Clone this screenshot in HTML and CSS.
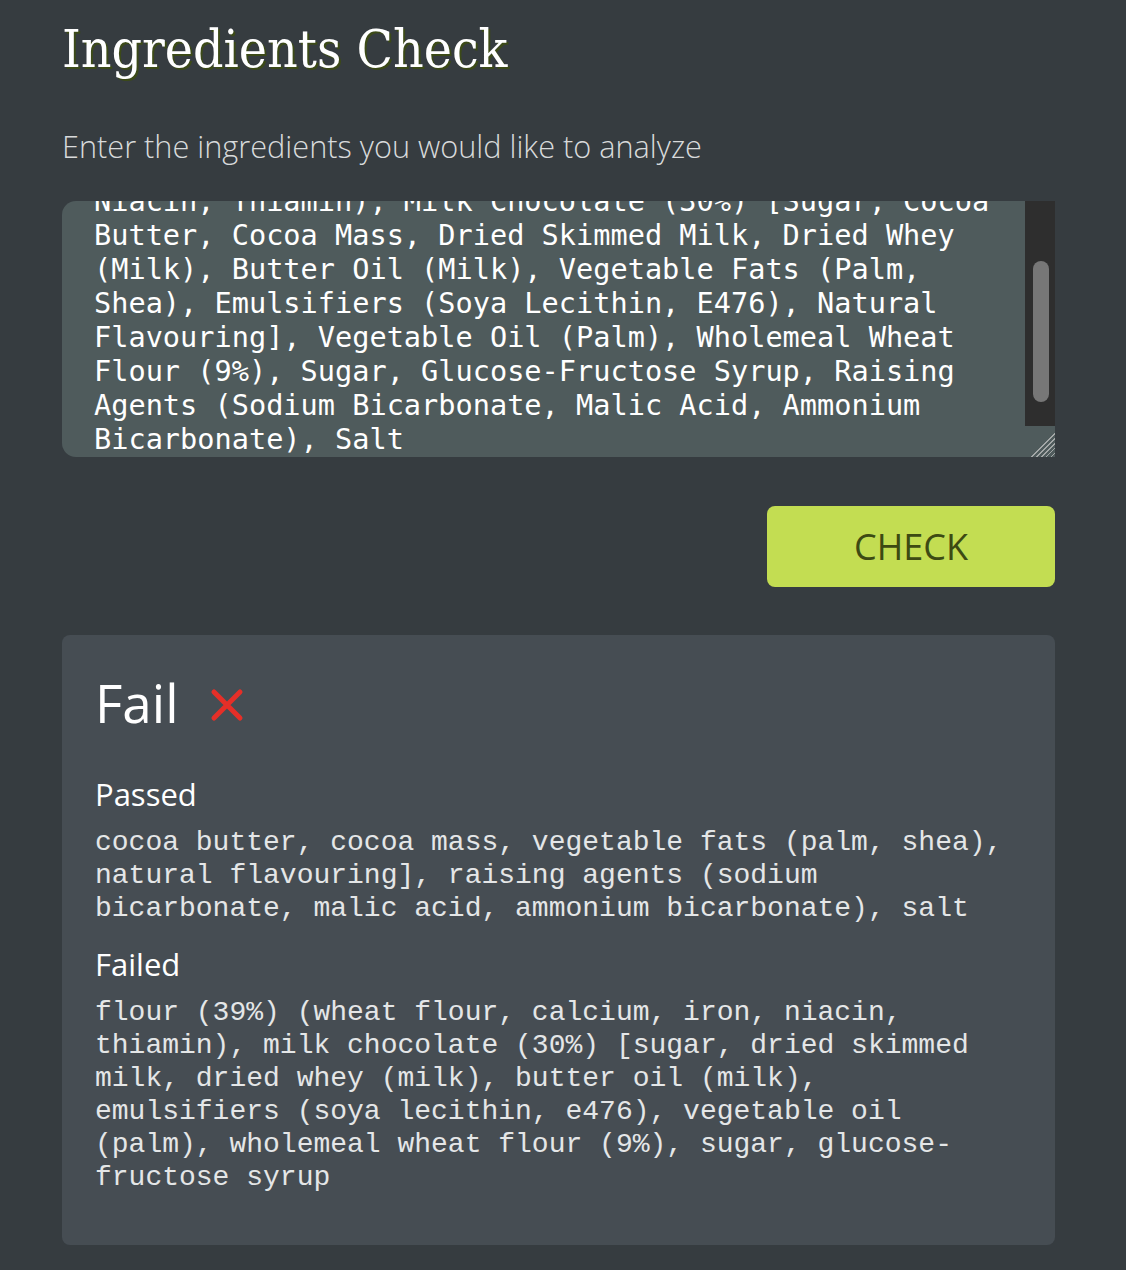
FILE: index.html
```html
<!DOCTYPE html>
<html lang="en">
<head>
<meta charset="utf-8">
<title>Ingredients Check</title>
<link rel="stylesheet" href="styles.css">
</head>
<body>
<main class="page">
  <h1 class="title">Ingredients Check</h1>
  <p class="lead">Enter the ingredients you would like to analyze</p>
  <div class="editor">
    <textarea class="input" spellcheck="false">Flour (39%) (Wheat Flour, Calcium, Iron,
Niacin, Thiamin), Milk Chocolate (30%) [Sugar, Cocoa Butter, Cocoa Mass, Dried Skimmed Milk, Dried Whey (Milk), Butter Oil (Milk), Vegetable Fats (Palm, Shea), Emulsifiers (Soya Lecithin, E476), Natural Flavouring], Vegetable Oil (Palm), Wholemeal Wheat Flour (9%), Sugar, Glucose-Fructose Syrup, Raising Agents (Sodium Bicarbonate, Malic Acid, Ammonium Bicarbonate), Salt</textarea>
    <div class="scrollbar" aria-hidden="true">
      <div class="scroll-track"><div class="scroll-thumb"></div></div>
      <div class="resizer"></div>
    </div>
  </div>
  <div class="actions">
    <button class="check-btn" type="button">CHECK</button>
  </div>
  <section class="result">
    <h2 class="verdict">Fail
      <svg class="fail-icon" width="34" height="34" viewBox="0 0 34 34" aria-hidden="true">
        <path d="M4 4 L30 30 M30 4 L4 30" stroke="#e62f28" stroke-width="5" stroke-linecap="round" fill="none"/>
      </svg>
    </h2>
    <h3 class="group-title">Passed</h3>
    <p class="list">cocoa butter, cocoa mass, vegetable fats (palm, shea), natural flavouring], raising agents (sodium bicarbonate, malic acid, ammonium bicarbonate), salt</p>
    <h3 class="group-title group-title--next">Failed</h3>
    <p class="list">flour (39%) (wheat flour, calcium, iron, niacin, thiamin), milk chocolate (30%) [sugar, dried skimmed milk, dried whey (milk), butter oil (milk), emulsifiers (soya lecithin, e476), vegetable oil (palm), wholemeal wheat flour (9%), sugar, glucose-fructose syrup</p>
  </section>
</main>
<script src="script.js"></script>
</body>
</html>
```

FILE: styles.css
```css
html, body {
  margin: 0;
  background: #363c40;
}

body {
  font-family: "Open Sans", "Noto Sans", sans-serif;
  color: #fff;
}

.page {
  width: 993px;
  padding: 0 0 40px 62px;
}

.title {
  margin: 18px 0 0;
  font-family: "DejaVu Serif Condensed", "DejaVu Serif", serif;
  font-weight: normal;
  font-size: 53px;
  line-height: 62px;
  color: #fff;
  text-shadow: 2px 2px 0 #3c4a18;
}

.lead {
  margin: 46px 0 0;
  font-size: 30.7px;
  line-height: 40px;
  font-weight: 300;
  color: #d8dadb;
}

.editor {
  display: flex;
  height: 256px;
  margin-top: 35px;
  border-radius: 14px 0 0 14px;
  overflow: hidden;
  background: #4f5b5c;
}

.input {
  flex: 1;
  display: block;
  box-sizing: border-box;
  height: 100%;
  margin: 0;
  padding: 32px 20px 32px 32px;
  border: 0;
  background: transparent;
  color: #fff;
  font-family: "DejaVu Sans Mono", monospace;
  font-size: 28.6px;
  line-height: 34px;
  outline: none;
  resize: none;
  overflow: hidden;
}

.scrollbar {
  display: flex;
  flex-direction: column;
  width: 30px;
}

.scroll-track {
  flex: 1;
  display: flex;
  padding: 60px 6px 24px 8px;
  background: #2e2e2e;
}

.scroll-thumb {
  flex: 1;
  border-radius: 8px;
  background: #777;
}

.resizer {
  height: 31px;
  background:
    linear-gradient(135deg, #4f5b5c 0 56%, transparent 56%),
    repeating-linear-gradient(135deg, #4f5b5c 0 2.2px, #a3a7a7 2.2px 3.4px);
}

.actions {
  display: flex;
  justify-content: flex-end;
  margin-top: 49px;
}

.check-btn {
  width: 288px;
  height: 81px;
  padding: 0;
  border: 0;
  border-radius: 8px;
  background: #c3dd52;
  color: #3d4a13;
  font-family: "Open Sans", sans-serif;
  font-size: 36px;
  cursor: pointer;
}

.result {
  margin-top: 48px;
  padding: 35px 46px 51px 33px;
  border-radius: 8px;
  background: #464d53;
}

.verdict {
  display: flex;
  align-items: center;
  gap: 31px;
  margin: 0;
  font-size: 53px;
  font-weight: 400;
  line-height: 65px;
  color: #fff;
}

.fail-icon {
  display: block;
  margin-top: 4px;
}

.group-title {
  margin: 41px 0 0;
  font-size: 31px;
  font-weight: 400;
  line-height: 37px;
  color: #fff;
}

.group-title--next {
  margin-top: 21px;
}

.list {
  margin: 13px 0 0;
  font-family: "Liberation Mono", "Courier New", monospace;
  font-size: 28px;
  line-height: 33px;
  color: #e4e6e7;
}
```

FILE: script.js
```js
const input = document.querySelector('.input');
input.scrollTop = input.scrollHeight - input.clientHeight - 31;
```
